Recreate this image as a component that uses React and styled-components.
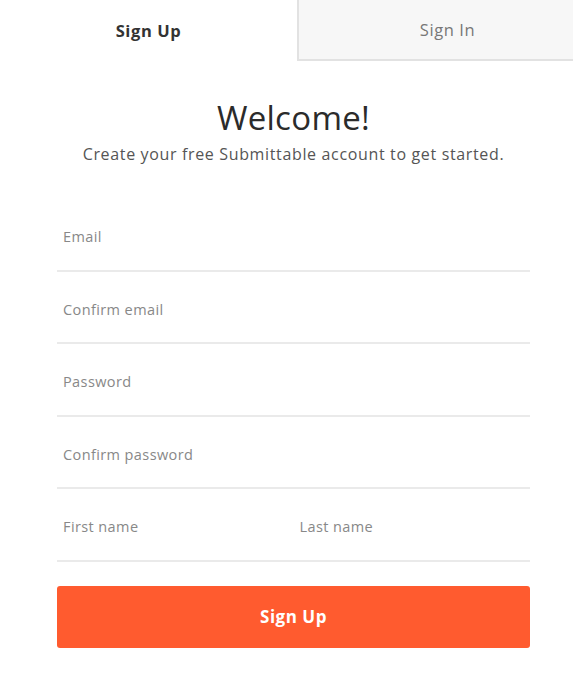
import React from 'react'
import styled, { createGlobalStyle } from 'styled-components'

const GlobalStyle = createGlobalStyle`
    html, body {
        margin: 0;
        padding: 0;
        background: #fff;
        font-family: "Open Sans", Lato, sans-serif;
    }
`

const Page = styled.div`
    width: 573px;
    height: 685px;
    overflow: hidden;
    background: #fff;
`

const Tabs = styled.div`
    display: flex;
    width: 596px;
    height: 61px;
`

const Tab = styled.div`
    flex: 1;
    display: flex;
    align-items: center;
    justify-content: center;
    box-sizing: border-box;
    font-size: 16.5px;
    letter-spacing: 0.6px;
    font-weight: ${(p) => (p.active ? 700 : 400)};
    color: ${(p) => (p.active ? '#333' : '#777')};
    background: ${(p) => (p.active ? '#fff' : '#f7f7f7')};
    border-left: ${(p) => (p.active ? 'none' : '2px solid #e2e2e2')};
    border-bottom: ${(p) => (p.active ? 'none' : '2px solid #e2e2e2')};
`

const Body = styled.div`
    width: 473px;
    margin-left: 57px;
    display: flex;
    flex-direction: column;
`

const Heading = styled.h1`
    margin: 36px 0 0;
    text-align: center;
    font-size: 33px;
    line-height: 42px;
    font-weight: 500;
    letter-spacing: 0.3px;
    color: #2b2b2b;
`

const Subtitle = styled.p`
    margin: 5px 0 0;
    text-align: center;
    font-size: 16px;
    line-height: 20px;
    letter-spacing: 0.65px;
    color: #555;
`

const Form = styled.div`
    margin-top: 35px;
    display: flex;
    flex-direction: column;
`

const Row = styled.div`
    display: flex;
    height: 72.5px;
    box-sizing: border-box;
    border-bottom: 2px solid #eaeaea;
`

const Field = styled.div`
    flex: 1;
    padding: 28px 0 0 6px;
    font-size: 14.5px;
    letter-spacing: 0.4px;
    color: #888;
`

const Button = styled.button`
    margin-top: 24px;
    height: 62px;
    width: 100%;
    border: none;
    border-radius: 3px;
    background: #ff5b2f;
    color: #fff;
    font-family: "Open Sans", Lato, sans-serif;
    font-size: 17px;
    letter-spacing: 0.5px;
    font-weight: 700;
    cursor: pointer;
`

const rows = [['Email'], ['Confirm email'], ['Password'], ['Confirm password'], ['First name', 'Last name']]

function App() {
    return (
        <Page>
            <GlobalStyle />
            <Tabs>
                <Tab active>Sign Up</Tab>
                <Tab>Sign In</Tab>
            </Tabs>
            <Body>
                <Heading>Welcome!</Heading>
                <Subtitle>Create your free Submittable account to get started.</Subtitle>
                <Form>
                    {rows.map((fields) => (
                        <Row key={fields[0]}>
                            {fields.map((f) => (
                                <Field key={f}>{f}</Field>
                            ))}
                        </Row>
                    ))}
                </Form>
                <Button>Sign Up</Button>
            </Body>
        </Page>
    )
}

export default App
